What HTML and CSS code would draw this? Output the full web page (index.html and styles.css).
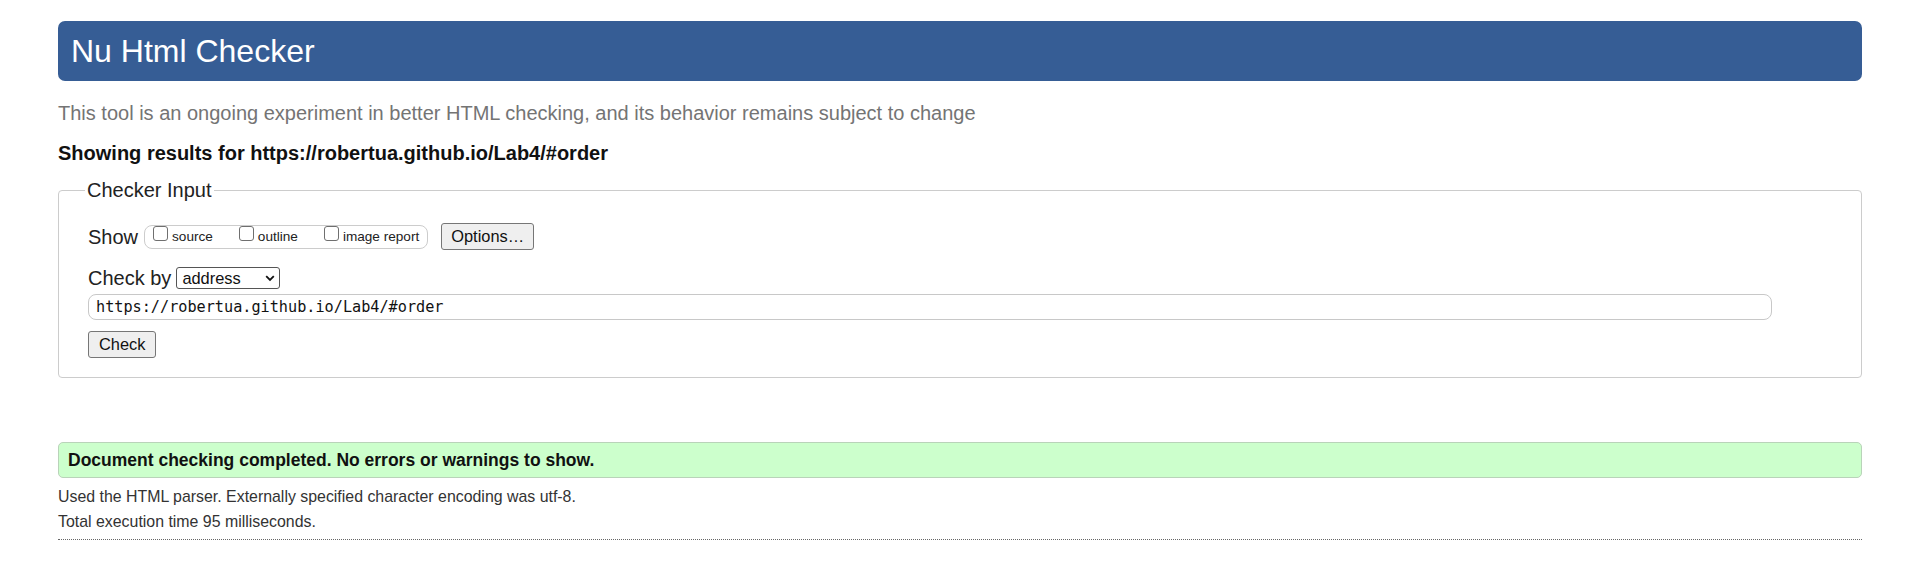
FILE: index.html
```html
<!DOCTYPE html>
<html lang="en">
<head>
<meta charset="utf-8">
<title>Nu Html Checker</title>
<link rel="stylesheet" href="styles.css">
</head>
<body>
<h1 class="title">Nu Html Checker</h1>
<p class="intro">This tool is an ongoing experiment in better HTML checking, and its behavior remains subject to change</p>
<p class="results-for">Showing results for https://robertua.github.io/Lab4/#order</p>
<form class="checker">
  <fieldset class="input-set">
    <legend class="input-legend">Checker Input</legend>
    <div class="row show-row">
      <span class="label">Show</span>
      <span class="show-group">
        <label class="opt"><input type="checkbox" class="cb"><span class="opt-text">source</span></label>
        <label class="opt"><input type="checkbox" class="cb"><span class="opt-text">outline</span></label>
        <label class="opt"><input type="checkbox" class="cb"><span class="opt-text">image report</span></label>
      </span>
      <button type="button" class="btn options">Options…</button>
    </div>
    <div class="row by-row">
      <span class="label">Check by</span>
      <span class="select-wrap">
        <select class="select"><option>address</option></select>
        <svg class="chev" width="10" height="7" viewBox="0 0 10 7"><path d="M1.2 1.2 L5 5 L8.8 1.2" fill="none" stroke="#111" stroke-width="1.8"/></svg>
      </span>
    </div>
    <input class="url" type="text" value="https://robertua.github.io/Lab4/#order">
    <div class="submit-row"><button type="button" class="btn check">Check</button></div>
  </fieldset>
</form>
<p class="success">Document checking completed. No errors or warnings to show.</p>
<div class="details">
  <p class="detail-line">Used the HTML parser. Externally specified character encoding was utf-8.</p>
  <p class="detail-line">Total execution time 95 milliseconds.</p>
</div>
</body>
</html>
```
FILE: styles.css
```css
html, body {
  background: #fff;
}
body {
  margin: 0;
  padding: 21px 55px 20px 58px;
  font-family: "Liberation Sans", Arial, sans-serif;
  color: #222;
}
.title {
  margin: 0;
  height: 60px;
  line-height: 60px;
  padding: 0 13px;
  background: #365d95;
  color: #fff;
  font-size: 32px;
  font-weight: normal;
  border-radius: 7px;
}
.intro {
  margin: 20px 0 0;
  font-size: 20px;
  line-height: 24px;
  color: #747474;
}
.results-for {
  margin: 16px 0 0;
  font-size: 20px;
  line-height: 24px;
  font-weight: bold;
  color: #111;
}
.checker {
  margin: 13px 0 0;
}
.input-set {
  margin: 0;
  padding: 21px 29px 19px;
  border: 1px solid #cccccc;
  border-radius: 4px;
  min-width: 0;
}
.input-legend {
  font-size: 20px;
  line-height: 24px;
  padding: 0 2px;
  margin-left: -3px;
  color: #222;
}
.row {
  display: flex;
  align-items: center;
}
.show-row {
  height: 27px;
}
.label {
  font-size: 20px;
  line-height: 24px;
  color: #222;
}
.show-group {
  display: flex;
  align-items: flex-start;
  height: 22px;
  margin-left: 6px;
  padding: 0 8px;
  border: 1px solid #cccccc;
  border-radius: 8px;
}
.opt {
  display: flex;
  align-items: flex-start;
  margin-right: 26px;
}
.opt:last-child {
  margin-right: 0;
}
.cb {
  appearance: none;
  -webkit-appearance: none;
  box-sizing: border-box;
  margin: 0 4px 0 0;
  width: 15px;
  height: 15px;
  border: 1px solid #6f6f6f;
  border-radius: 3px;
  background: #fff;
}
.opt-text {
  font-size: 13.6px;
  line-height: 20px;
  padding-top: 1px;
  color: #222;
}
.btn {
  box-sizing: border-box;
  font-family: "Liberation Sans", Arial, sans-serif;
  font-size: 16.4px;
  height: 27px;
  padding: 0 9px;
  background: #efefef;
  border: 1px solid #767676;
  border-radius: 3px;
  color: #111;
}
.options {
  margin-left: 13px;
}
.check {
  padding: 0 10px;
}
.by-row {
  height: 24px;
  margin-top: 16px;
}
.select-wrap {
  position: relative;
  display: flex;
  margin-left: 5px;
}
.select {
  appearance: none;
  -webkit-appearance: none;
  box-sizing: border-box;
  width: 104px;
  height: 22px;
  padding: 0 0 0 5px;
  font-family: "Liberation Sans", Arial, sans-serif;
  font-size: 16.4px;
  border: 1px solid #555;
  border-radius: 3px;
  background: #fff;
  color: #111;
}
.chev {
  position: absolute;
  right: 5px;
  top: 8px;
  pointer-events: none;
}
.url {
  display: block;
  box-sizing: border-box;
  width: calc(100% - 60px);
  height: 26px;
  margin: 4px 0 0;
  padding: 0 7px;
  font-family: "DejaVu Sans Mono", "Liberation Mono", monospace;
  font-size: 15.2px;
  color: #111;
  border: 1px solid #c8c8c8;
  border-radius: 8px;
  background: #fff;
}
.submit-row {
  margin-top: 11px;
  display: flex;
}
.success {
  margin: 64px 0 0;
  padding: 0 9px;
  border: 1px solid #b9d3b9;
  border-radius: 5px;
  background: #ccffcc;
  font-size: 17.5px;
  line-height: 34px;
  font-weight: bold;
  color: #111;
}
.details {
  margin-top: 7px;
  padding-bottom: 5px;
  border-bottom: 1px dotted #666;
}
.detail-line {
  margin: 0;
  font-size: 15.9px;
  line-height: 24.5px;
  color: #333;
}
```
